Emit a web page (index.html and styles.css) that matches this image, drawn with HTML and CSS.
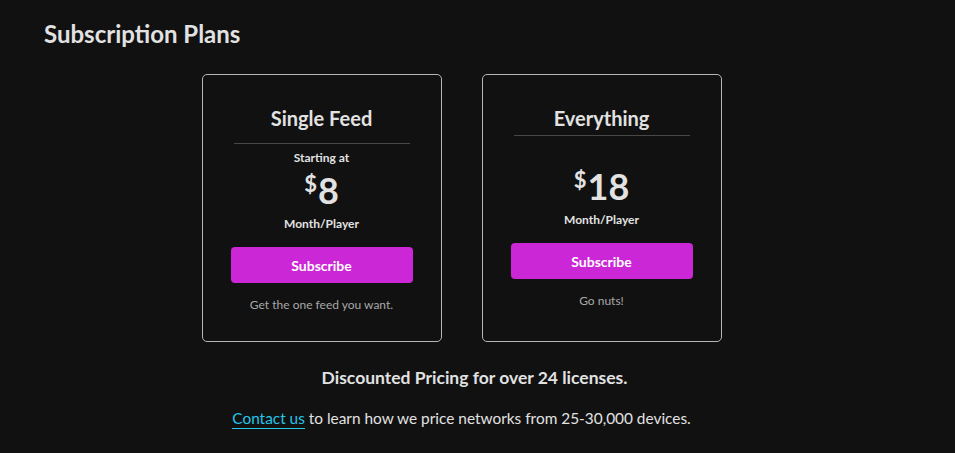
FILE: index.html
```html
<!DOCTYPE html>
<html lang="en">
<head>
<meta charset="utf-8">
<title>Subscription Plans</title>
<link rel="stylesheet" href="styles.css">
</head>
<body>
<main class="page">
  <h1 class="page-title">Subscription Plans</h1>
  <section class="plans">
    <article class="plan plan--single">
      <h2 class="plan-name">Single Feed</h2>
      <hr class="plan-divider">
      <p class="plan-from">Starting at</p>
      <p class="plan-price"><span class="plan-currency">$</span><span class="plan-amount">8</span></p>
      <p class="plan-unit">Month/Player</p>
      <button class="plan-button">Subscribe</button>
      <p class="plan-note">Get the one feed you want.</p>
    </article>
    <article class="plan plan--all">
      <h2 class="plan-name">Everything</h2>
      <hr class="plan-divider">
      <p class="plan-price"><span class="plan-currency">$</span><span class="plan-amount">18</span></p>
      <p class="plan-unit">Month/Player</p>
      <button class="plan-button">Subscribe</button>
      <p class="plan-note">Go nuts!</p>
    </article>
  </section>
  <p class="discount">Discounted Pricing for over 24 licenses.</p>
  <p class="contact"><a class="contact-link" href="#">Contact us</a> to learn how we price networks from 25-30,000 devices.</p>
</main>
</body>
</html>
```

FILE: styles.css
```css
html, body {
  margin: 0;
  padding: 0;
  background: #111111;
}

body {
  font-family: Lato, "Noto Sans", sans-serif;
  color: #e2e2e2;
}

.page {
  padding: 18px 0 0 44px;
  box-sizing: border-box;
  width: 955px;
  height: 453px;
}

.page-title {
  margin: 0;
  font-size: 24px;
  line-height: 32px;
  font-weight: 700;
  color: #e2e2e2;
}

.plans {
  display: flex;
  justify-content: center;
  gap: 40px;
  margin-top: 24px;
  padding-right: 76px;
}

.plan {
  width: 240px;
  height: 268px;
  box-sizing: border-box;
  border: 1px solid #b5b5b5;
  border-radius: 5px;
  padding: 28px 28px 0 28px;
  display: flex;
  flex-direction: column;
  align-items: center;
  text-align: center;
}

.plan-name {
  margin: 0;
  font-size: 20px;
  line-height: 30px;
  font-weight: 700;
}

.plan-divider {
  width: 176px;
  border: 0;
  border-top: 1px solid #484848;
  margin: 10px 0 0 0;
}

.plan--all .plan-divider {
  margin-top: 2px;
}

.plan-from {
  margin: 6px 0 0 0;
  font-size: 12px;
  line-height: 15px;
  font-weight: 700;
}

.plan-price {
  display: flex;
  justify-content: center;
  align-items: flex-start;
  margin: 5px 0 0 0;
  font-weight: 700;
}

.plan--all .plan-price {
  margin-top: 30px;
}

.plan-currency {
  font-size: 22px;
  line-height: 22px;
  margin-top: 3px;
  margin-right: 1px;
}

.plan-amount {
  font-size: 36px;
  line-height: 40px;
}

.plan-unit {
  margin: 6px 0 0 0;
  font-size: 12px;
  line-height: 15px;
  font-weight: 700;
}

.plan-button {
  margin-top: 16px;
  width: 182px;
  height: 36px;
  border: 0;
  border-radius: 4px;
  background: #cb27d7;
  color: #ffffff;
  font-family: Lato, "Noto Sans", sans-serif;
  font-size: 14px;
  font-weight: 700;
  cursor: pointer;
}

.plan-note {
  margin: 14px 0 0 0;
  font-size: 12px;
  line-height: 15px;
  color: #a8a8a8;
}

.discount {
  margin: 26px 0 0 0;
  padding-right: 50px;
  text-align: center;
  font-size: 17.5px;
  line-height: 20px;
  font-weight: 700;
}

.contact {
  margin: 20px 0 0 0;
  padding-right: 76px;
  text-align: center;
  font-size: 15.4px;
  line-height: 20px;
}

.contact-link {
  color: #25c5ea;
  text-decoration: none;
  border-bottom: 1px solid #25c5ea;
  padding-bottom: 1px;
}
```
